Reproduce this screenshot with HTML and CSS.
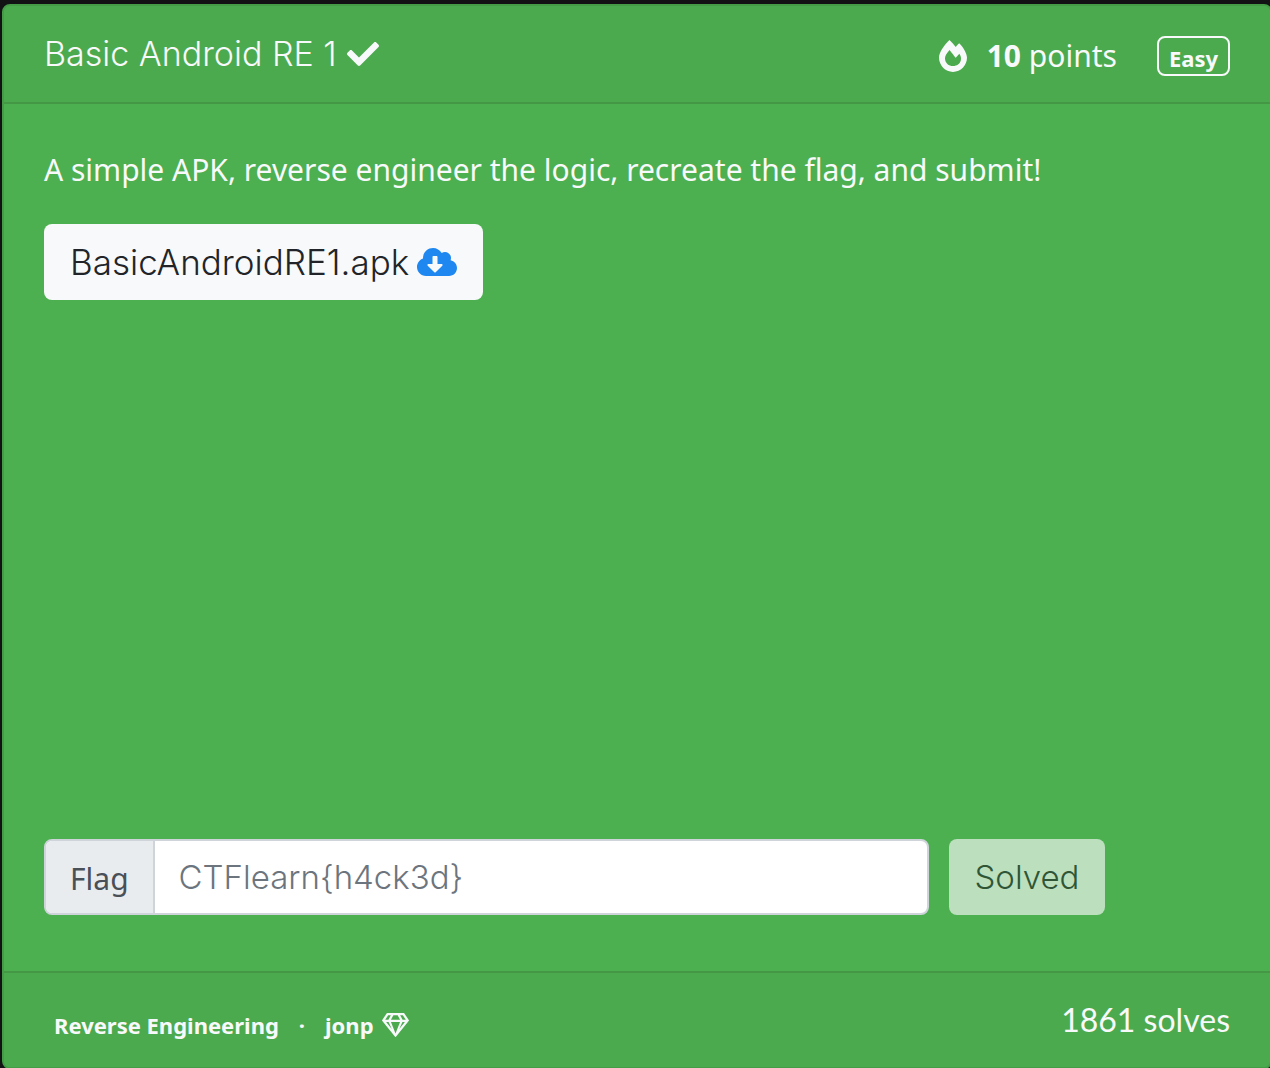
FILE: index.html
```html
<!DOCTYPE html>
<html lang="en">
<head>
<meta charset="utf-8">
<meta name="viewport" content="width=device-width, initial-scale=1">
<title>Basic Android RE 1</title>
<link rel="stylesheet" href="styles.css">
</head>
<body>
<main class="card">
  <header class="card-header">
    <h1 class="title">Basic Android RE 1
      <svg class="icon icon-check" viewBox="0 0 512 512" role="img" aria-label="Solved"><path d="M173.898 439.404l-166.4-166.4c-9.997-9.997-9.997-26.206 0-36.204l36.203-36.204c9.997-9.998 26.207-9.998 36.204 0L192 312.69 432.095 72.596c9.997-9.997 26.207-9.997 36.204 0l36.203 36.204c9.997 9.997 9.997 26.206 0 36.204l-294.4 294.401c-9.998 9.997-26.207 9.997-36.204-.001z"/></svg>
    </h1>
    <div class="meta">
      <svg class="icon icon-fire" viewBox="0 0 448 512" aria-hidden="true"><path d="M323.56 51.2c-20.8 19.3-39.58 39.59-56.22 59.97C240.08 73.62 206.28 35.53 168 0 69.74 91.17 0 209.96 0 281.6 0 408.85 100.29 512 224 512s224-103.15 224-230.4c0-53.27-51.98-163.14-124.44-230.4zm-19.47 340.65C282.43 407.01 255.72 416 226.86 416 154.71 416 96 368.26 96 290.75c0-38.61 24.31-72.63 72.79-130.75 6.93 7.98 98.83 125.34 98.83 125.34l58.63-66.88c4.14 6.85 7.91 13.55 11.27 19.97 27.35 52.19 15.81 118.97-33.43 153.42z"/></svg>
      <span class="points"><strong>10</strong> points</span>
      <span class="badge">Easy</span>
    </div>
  </header>

  <section class="card-body">
    <p class="description">A simple APK, reverse engineer the logic, recreate the flag, and submit!</p>
    <a class="button download" href="#">BasicAndroidRE1.apk
      <svg class="icon icon-cloud" viewBox="0 0 640 512" aria-hidden="true"><path d="M537.6 226.6c4.1-10.7 6.4-22.4 6.4-34.6 0-53-43-96-96-96-19.7 0-38.1 6-53.3 16.2C367 64.2 315.3 32 256 32c-88.4 0-160 71.6-160 160 0 2.7.1 5.4.2 8.1C40.2 219.8 0 273.2 0 336c0 79.5 64.5 144 144 144h368c70.7 0 128-57.3 128-128 0-61.9-44-113.6-102.4-125.4zm-132.9 88.7L299.3 420.7c-6.2 6.2-16.4 6.2-22.6 0L171.3 315.3c-10.1-10.1-2.9-27.3 11.3-27.3H248V176c0-8.8 7.2-16 16-16h48c8.8 0 16 7.2 16 16v112h65.4c14.2 0 21.4 17.2 11.3 27.3z"/></svg>
    </a>
    <form class="flag-form">
      <div class="input-group">
        <label class="input-label" for="flag">Flag</label>
        <input class="input" id="flag" type="text" placeholder="CTFlearn{h4ck3d}">
      </div>
      <button class="button solved" type="submit" disabled>Solved</button>
    </form>
  </section>

  <footer class="card-footer">
    <div class="tags">
      <a class="tag" href="#">Reverse Engineering</a>
      <span>·</span>
      <a class="tag" href="#">jonp
        <svg class="icon icon-gem" viewBox="0 0 576 512" aria-hidden="true"><path d="M464 0H112c-4 0-7.700 2-9.900 5.400L2 152.800c-2.900 4.400-2.600 10.200.7 14.200l276 340.800c4.800 5.900 13.800 5.900 18.600 0l276-340.800c3.300-4.100 3.600-9.800.7-14.200L473.900 5.400C471.700 2 468 0 464 0zm-19.600 48l63.300 96h-68.400l-51.700-96h56.800zm-202.100 0h91.400l51.700 96H190.600l51.700-96zm-110.800 0h56.800l-51.700 96H68.300l63.200-96zm-43.200 144h51.700L208 340 88.300 192zm102.900 0h193.600L288 435.300 191.200 192zM368 340l68-148h51.700L368 340z"/></svg>
      </a>
    </div>
    <span class="solves">1861 solves</span>
  </footer>
</main>
</body>
</html>
```
FILE: styles.css
```css
* {
  box-sizing: border-box;
}

html,
body {
  margin: 0;
  height: 100%;
}

body {
  padding: 4px 0 0 2px;
  overflow: hidden;
  background: #121214;
  color: #f8f9fa;
  font: 400 30px/48px "Noto Sans", "Open Sans", sans-serif;
}

.card {
  display: flex;
  flex-direction: column;
  min-height: calc(100% + 1px);
  margin-right: -2px;
  border: 2px solid #449c47;
  border-radius: 8px;
  background: #4caf50;
  overflow: hidden;
}

.icon {
  fill: currentColor;
}

.card-header,
.card-footer {
  display: flex;
  justify-content: space-between;
  align-items: center;
  background: #4caa4e;
}

.card-header {
  height: 98px;
  padding: 0 40px;
  border-bottom: 2px solid #449744;
}

.title {
  display: flex;
  align-items: center;
  gap: 10px;
  margin: 0;
  font: 300 34px/48px Inter, sans-serif;
}

.icon-check {
  width: 32px;
  height: 32px;
}

.meta {
  display: flex;
  align-items: center;
  padding-top: 4px;
}

.icon-fire {
  width: 28px;
  height: 32px;
  margin-right: 20px;
}

.points {
  margin-right: 40px;
}

.badge {
  height: 40px;
  padding: 0 10px;
  border: 2px solid #f8f9fa;
  border-radius: 8px;
  font-size: 22px;
  font-weight: 700;
  line-height: 40px;
}

.card-body {
  display: flex;
  flex: 1;
  flex-direction: column;
  align-items: flex-start;
  padding: 42px 40px 56px;
}

.description {
  margin: 0 0 30px;
}

.button {
  display: flex;
  align-items: center;
  justify-content: center;
  height: 76px;
  padding: 0 26px;
  border: 0;
  border-radius: 8px;
  background: #f8f9fa;
  color: #212529;
  font: 300 33px/48px Inter, sans-serif;
  text-decoration: none;
}

.download {
  font-size: 35px;
}

.icon-cloud {
  width: 40px;
  height: 32px;
  margin-left: 8px;
  color: #1f87f0;
}

.flag-form {
  display: grid;
  grid-template-columns: repeat(12, 1fr);
  gap: 20px;
  width: 100%;
  margin-top: auto;
}

.input-group {
  display: flex;
  grid-column: span 9;
  height: 76px;
  border: 2px solid #ced4da;
  border-radius: 8px;
  background: #fff;
  overflow: hidden;
}

.input-label {
  display: flex;
  align-items: center;
  padding: 4px 24px 0;
  border-right: 2px solid #ced4da;
  background: #e9ecef;
  color: #495057;
}

.input {
  flex: 1;
  min-width: 0;
  padding: 0 24px;
  border: 0;
  background: transparent;
  color: #495057;
  font: 300 33px/48px Inter, sans-serif;
}

.input::placeholder {
  color: #6c757d;
  opacity: 1;
}

.solved {
  grid-column: span 3;
  justify-self: start;
  opacity: 0.65;
}

.card-footer {
  height: 96px;
  padding: 0 40px;
  border-top: 2px solid #449744;
}

.tags {
  display: flex;
  align-items: center;
  gap: 20px;
  padding: 10px 10px 0;
  font-size: 22px;
  font-weight: 700;
}

.tag {
  display: flex;
  align-items: center;
  gap: 8px;
  color: inherit;
  text-decoration: none;
}

.icon-gem {
  width: 27px;
  height: 24px;
}

.solves {
  font: 400 32px/48px Lato, sans-serif;
}
```
